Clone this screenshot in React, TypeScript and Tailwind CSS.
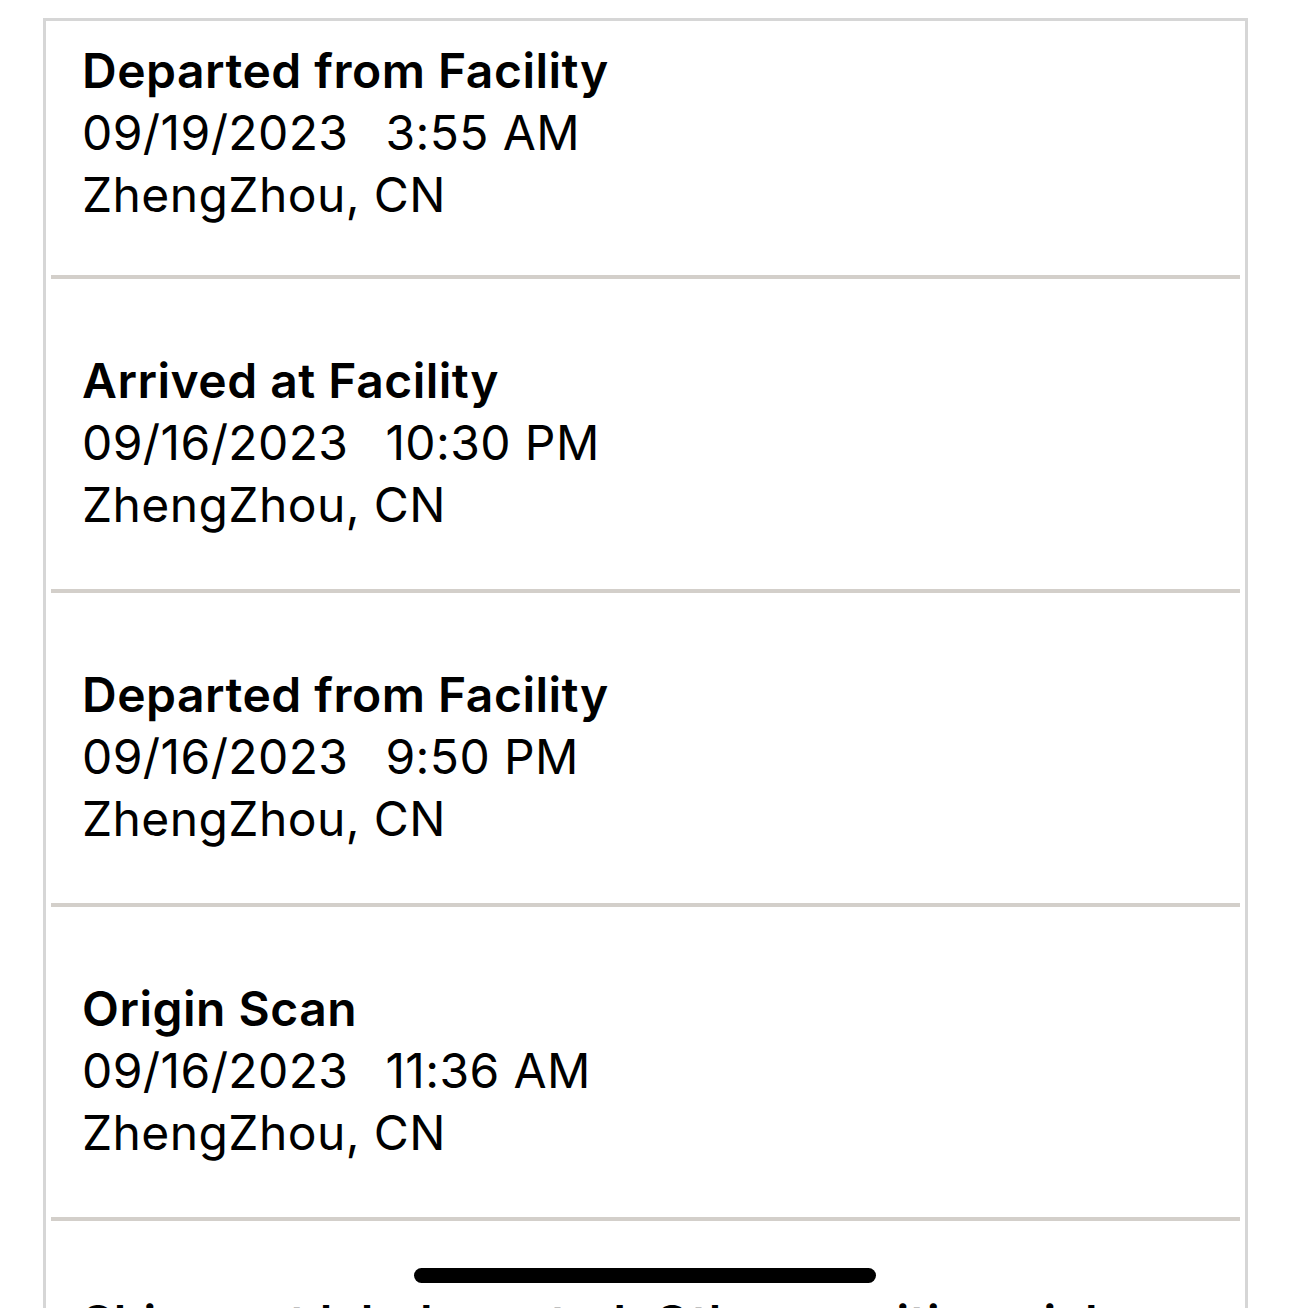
import React from "react"

interface TrackingEvent {
  title: string
  date: string
  time: string
  place: string
}

const events: TrackingEvent[] = [
  { title: "Departed from Facility", date: "09/19/2023", time: "3:55 AM", place: "ZhengZhou, CN" },
  { title: "Arrived at Facility", date: "09/16/2023", time: "10:30 PM", place: "ZhengZhou, CN" },
  { title: "Departed from Facility", date: "09/16/2023", time: "9:50 PM", place: "ZhengZhou, CN" },
  { title: "Origin Scan", date: "09/16/2023", time: "11:36 AM", place: "ZhengZhou, CN" },
  { title: "Shipment label created, Other awaiting pickup", date: "09/15/2023", time: "8:12 PM", place: "ZhengZhou, CN" },
]

const EventRow: React.FC<{ event: TrackingEvent; first: boolean }> = ({ event, first }) => {
  return (
    <div className="mx-[5px]">
      <div className={`pl-[31px] ${first ? "pt-[19px] pb-[49px]" : "pt-[71px] pb-[53px]"}`}>
        <p className="text-[48px] leading-[62px] font-semibold text-black tracking-[0.5px] whitespace-nowrap">{event.title}</p>
        <p className="text-[48px] leading-[62px] text-black tracking-[0.4px] whitespace-nowrap">
          <span>{event.date}</span>
          <span className="ml-[37px]">{event.time}</span>
        </p>
        <p className="text-[48px] leading-[62px] text-black tracking-[0.4px] whitespace-nowrap">{event.place}</p>
      </div>
      <div className="h-[4px] bg-[#d3cfca]" />
    </div>
  )
}

const App: React.FC = () => {
  return (
    <div className="relative h-[1308px] w-[1290px] overflow-hidden bg-white font-['Inter','Liberation_Sans',sans-serif]">
      <div className="pt-[18px] pl-[43px] pr-[42px]">
        <div className="border-[3px] border-[#d6d6d6] bg-white">
          {events.map((event, i) => (
            <EventRow key={i} event={event} first={i === 0} />
          ))}
        </div>
      </div>
      <div className="absolute left-[414px] top-[1268px] h-[15px] w-[462px] rounded-full bg-black" />
    </div>
  )
}

export default App
